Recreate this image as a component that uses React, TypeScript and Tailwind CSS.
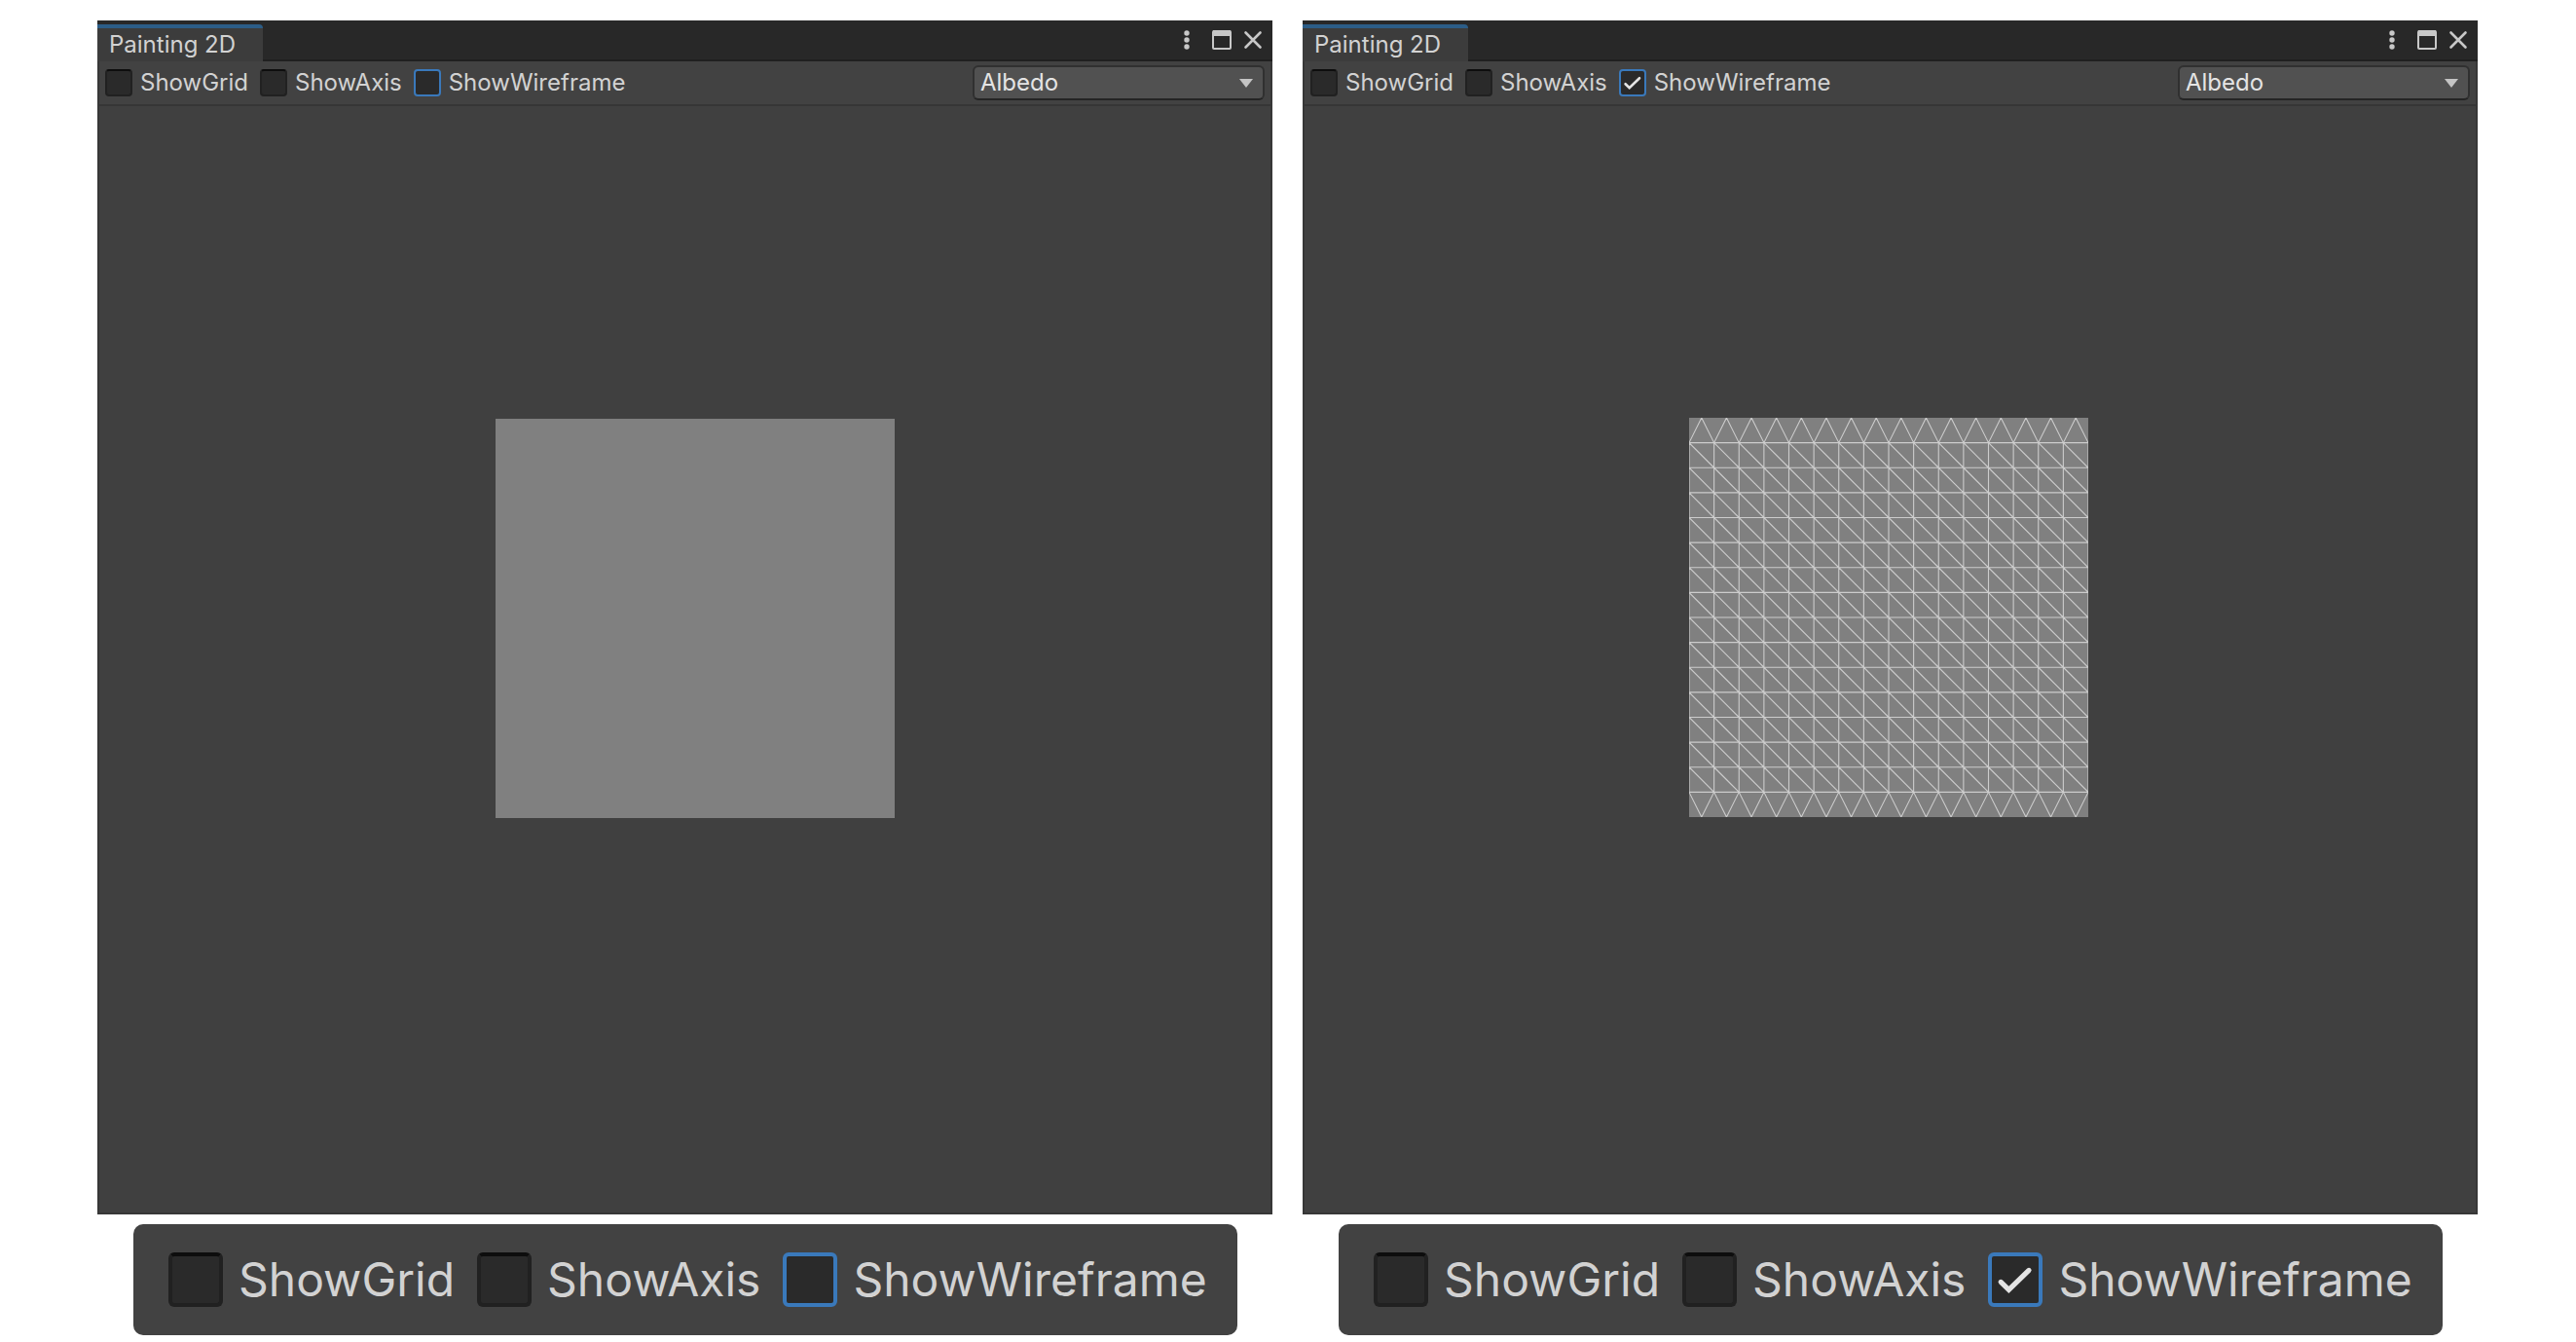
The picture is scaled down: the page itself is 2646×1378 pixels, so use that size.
import { useState } from "react";
import clsx from "clsx";

type Overlay = "ShowGrid" | "ShowAxis" | "ShowWireframe";
type Overlays = Record<Overlay, boolean>;

const OVERLAYS: Overlay[] = ["ShowGrid", "ShowAxis", "ShowWireframe"];
const CELLS = 16;
const CELL = 25.6;
const MESH_SIZE = CELLS * CELL;

function Toggle({
  name,
  checked,
  active,
  large,
  onChange,
}: {
  name: string;
  checked: boolean;
  active: boolean;
  large?: boolean;
  onChange: (value: boolean) => void;
}) {
  return (
    <label className={clsx("flex items-center", large ? "gap-4" : "gap-2")}>
      <span className={clsx("relative block shrink-0", large ? "size-14" : "size-7")}>
        <input
          type="checkbox"
          checked={checked}
          onChange={(e) => onChange(e.target.checked)}
          className={clsx(
            "block size-full appearance-none bg-[#2a2a2a]",
            large ? "rounded-md border-4" : "rounded border-2",
            active ? "border-[#3a79bb]" : "border-[#212121] border-t-[#0d0d0d]",
          )}
        />
        {checked && (
          <svg viewBox="0 0 28 28" className="pointer-events-none absolute inset-0 size-full" fill="none">
            <path d="M6.6 15.2L10.7 19.2L21 9.2" stroke="#e4e4e4" strokeWidth="2.6" strokeLinecap="round" strokeLinejoin="miter" />
          </svg>
        )}
      </span>
      <span className={large ? "text-5xl" : "text-2xl"}>{name}</span>
    </label>
  );
}

function Toggles({
  values,
  onChange,
  large,
}: {
  values: Overlays;
  onChange: (name: Overlay, value: boolean) => void;
  large?: boolean;
}) {
  return (
    <div className={clsx("flex items-center", large ? "gap-[23px]" : "gap-3")}>
      {OVERLAYS.map((name) => (
        <Toggle
          key={name}
          name={name}
          checked={values[name]}
          active={name === "ShowWireframe"}
          large={large}
          onChange={(value) => onChange(name, value)}
        />
      ))}
    </div>
  );
}

function wireframePath() {
  const parts: string[] = [];
  const first = CELL;
  const last = MESH_SIZE - CELL;
  for (let i = 0; i <= CELLS; i++) {
    const p = i * CELL;
    parts.push(`M${p} ${first}V${last}`);
    if (i > 0 && i < CELLS) parts.push(`M0 ${p}H${MESH_SIZE}`);
  }
  for (let i = 0; i < CELLS; i++) {
    const a = i * CELL;
    const mid = a + CELL / 2;
    const b = a + CELL;
    parts.push(`M${a} ${first}L${mid} 0L${b} ${first}`);
    parts.push(`M${a} ${last}L${mid} ${MESH_SIZE}L${b} ${last}`);
    for (let j = 1; j < CELLS - 1; j++) {
      parts.push(`M${a} ${j * CELL}L${b} ${(j + 1) * CELL}`);
    }
  }
  return parts.join("");
}

function Mesh({ wireframe }: { wireframe: boolean }) {
  return (
    <svg
      viewBox={`0 0 ${MESH_SIZE} ${MESH_SIZE}`}
      className="size-[410px]"
      role="img"
      aria-label="Mesh preview"
    >
      <rect width={MESH_SIZE} height={MESH_SIZE} fill="#808080" />
      {wireframe && <path d={wireframePath()} fill="none" stroke="#cccccc" strokeWidth="1.1" />}
    </svg>
  );
}

function PaintingWindow({ initial, canvasClass }: { initial: Overlays; canvasClass: string }) {
  const [values, setValues] = useState(initial);
  const update = (name: Overlay, value: boolean) => setValues((v) => ({ ...v, [name]: value }));

  return (
    <section className="flex min-w-0 flex-1 flex-col gap-[10px]">
      <div className="flex flex-1 flex-col bg-[#404040]">
        <header className="flex h-[42px] items-stretch justify-between bg-[#282828]">
          <div className="flex w-[170px] pt-1">
            <button
              type="button"
              className="flex flex-1 items-center rounded-tr-sm border-t-4 border-[#2c5d87] bg-[#3c3c3c] pl-3 text-2xl whitespace-nowrap"
            >
              Painting 2D
            </button>
          </div>
          <div className="flex flex-1 items-center justify-end border-b-2 border-[#202020] pr-[10px]">
            <button type="button" aria-label="Menu" className="mr-5">
              <svg viewBox="0 0 12 20" className="block h-5 w-3" fill="#c8c8c8">
                <circle cx="6" cy="3" r="2.7" />
                <circle cx="6" cy="10" r="2.7" />
                <circle cx="6" cy="17" r="2.7" />
              </svg>
            </button>
            <button type="button" aria-label="Maximize" className="mr-3">
              <svg viewBox="0 0 20 20" className="block size-5" fill="none">
                <rect x="1" y="1" width="18" height="18" rx="1" stroke="#c8c8c8" strokeWidth="2" />
                <rect x="1" y="0" width="18" height="6" fill="#c8c8c8" />
              </svg>
            </button>
            <button type="button" aria-label="Close">
              <svg viewBox="0 0 20 20" className="block size-5" fill="none">
                <path d="M2.5 2.5L17.5 17.5M17.5 2.5L2.5 17.5" stroke="#c8c8c8" strokeWidth="2.6" strokeLinecap="round" />
              </svg>
            </button>
          </div>
        </header>
        <div className="flex flex-1 flex-col border-x-2 border-b-2 border-[#373737]">
          <div className="flex h-[46px] items-center justify-between border-b-2 border-[#363636] bg-[#424242] px-1.5">
            <Toggles values={values} onChange={update} />
            <div className="relative w-[300px]">
              <select
                aria-label="Texture channel"
                className="block h-9 w-full appearance-none rounded-md border-2 border-[#303030] border-b-[#242424] bg-[#515151] pl-1.5 text-2xl leading-8 text-[#e4e4e4]"
              >
                <option>Albedo</option>
              </select>
              <svg viewBox="0 0 14 9" className="pointer-events-none absolute top-3.5 right-3 h-[9px] w-[14px]" fill="#c4c4c4">
                <path d="M0 0H14L7 9Z" />
              </svg>
            </div>
          </div>
          <div className={clsx("flex flex-1 items-center justify-center", canvasClass)}>
            <Mesh wireframe={values.ShowWireframe} />
          </div>
        </div>
      </div>
      <div className="mr-[36px] ml-[37px] flex h-[114px] items-center rounded-[10px] bg-[#424242] pl-9">
        <Toggles values={values} onChange={update} large />
      </div>
    </section>
  );
}

export default function App() {
  return (
    <main className="flex min-h-screen gap-[31px] bg-white pt-[21px] pr-[101px] pb-[7px] pl-[100px] font-['Inter','Liberation_Sans',sans-serif] text-[#d2d2d2]">
      <PaintingWindow
        initial={{ ShowGrid: false, ShowAxis: false, ShowWireframe: false }}
        canvasClass="pb-[84px] pl-5"
      />
      <PaintingWindow
        initial={{ ShowGrid: false, ShowAxis: false, ShowWireframe: true }}
        canvasClass="pr-[3px] pb-[86px]"
      />
    </main>
  );
}
